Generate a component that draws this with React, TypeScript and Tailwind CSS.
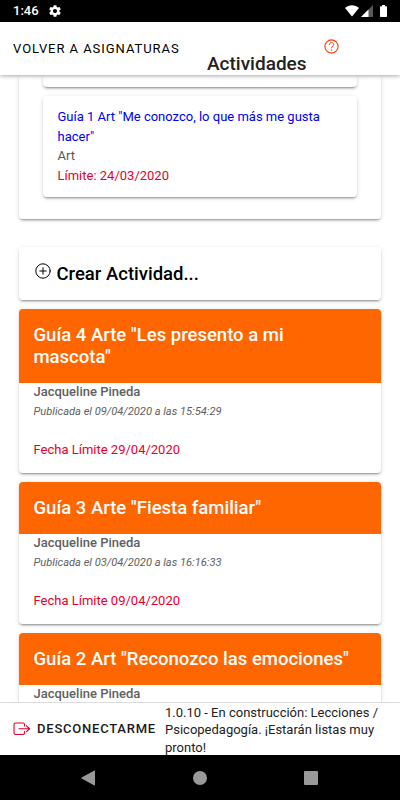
import React from 'react';

interface Activity {
  title: string;
  teacher: string;
  published?: string;
  limit?: string;
}

const activities: Activity[] = [
  {
    title: 'Guía 4 Arte "Les presento a mi mascota"',
    teacher: 'Jacqueline Pineda',
    published: '09/04/2020 a las 15:54:29',
    limit: '29/04/2020',
  },
  {
    title: 'Guía 3 Arte "Fiesta familiar"',
    teacher: 'Jacqueline Pineda',
    published: '03/04/2020 a las 16:16:33',
    limit: '09/04/2020',
  },
  {
    title: 'Guía 2 Art "Reconozco las emociones"',
    teacher: 'Jacqueline Pineda',
  },
];

const cardShadow =
  'rounded-[4px] bg-white shadow-[0_3px_1px_-2px_rgba(0,0,0,0.2),0_2px_2px_0_rgba(0,0,0,0.14),0_1px_5px_0_rgba(0,0,0,0.12)]';

const StatusBar = () => (
  <div className="flex h-[22px] shrink-0 items-center bg-black pr-[13px] pl-[13px] text-white">
    <span className="text-[13px] leading-[22px] font-medium">1:46</span>
    <svg className="ml-[9px] h-[14px] w-[14px]" viewBox="0 0 24 24" fill="currentColor">
      <path d="M19.43 12.98c.04-.32.07-.64.07-.98s-.03-.66-.07-.98l2.11-1.65c.19-.15.24-.42.12-.64l-2-3.46c-.12-.22-.39-.3-.61-.22l-2.49 1c-.52-.4-1.08-.73-1.69-.98l-.38-2.65C14.46 2.18 14.25 2 14 2h-4c-.25 0-.46.18-.49.42l-.38 2.65c-.61.25-1.17.59-1.69.98l-2.49-1c-.23-.09-.49 0-.61.22l-2 3.46c-.13.22-.07.49.12.64l2.11 1.65c-.04.32-.07.65-.07.98s.03.66.07.98l-2.11 1.65c-.19.15-.24.42-.12.64l2 3.46c.12.22.39.3.61.22l2.49-1c.52.4 1.08.73 1.69.98l.38 2.65c.03.24.24.42.49.42h4c.25 0 .46-.18.49-.42l.38-2.65c.61-.25 1.17-.59 1.69-.98l2.49 1c.23.09.49 0 .61-.22l2-3.46c.12-.22.07-.49-.12-.64l-2.11-1.65zM12 15.5c-1.93 0-3.5-1.57-3.5-3.5s1.57-3.5 3.5-3.5 3.5 1.57 3.5 3.5-1.57 3.5-3.5 3.5z" />
    </svg>
    <svg className="ml-auto h-[12px] w-[14px]" viewBox="0 0 14 12" fill="currentColor">
      <path d="M0 3C4-.6 10-.6 14 3L7 11.500z" />
    </svg>
    <svg className="ml-[2px] h-[12px] w-[12px]" viewBox="0 0 12 12" fill="currentColor">
      <path d="M12 0v12H0z" opacity=".35" />
      <path d="M7.500 4.500V12H0z" />
    </svg>
    <svg className="ml-[7px] h-[12px] w-[7px]" viewBox="0 0 7 12" fill="currentColor">
      <path d="M2 0h3v1.200h1.300q.7 0 .7.700v9.400q0 .7-.7.700H.7q-.7 0-.7-.7V1.900q0-.7.700-.7H2z" />
    </svg>
  </div>
);

const Header = () => (
  <header className="z-10 flex h-[53px] shrink-0 bg-white pl-[13px] shadow-[0_1px_4px_rgba(0,0,0,0.35)]">
    <button className="h-[53px] w-[194px] text-left text-[13px] font-normal tracking-[0.95px] text-black uppercase">
      Volver a asignaturas
    </button>
    <h1 className="w-[116px] pt-[30px] text-[19px] leading-[24px] font-medium text-[#222]">
      Actividades
    </h1>
    <svg
      className="mt-[17px] ml-[1px] h-[15px] w-[15px]"
      viewBox="0 0 15 15"
      fill="none"
      stroke="#ff3d0a"
      strokeLinecap="round"
    >
      <circle cx="7.500" cy="7.500" r="6.600" strokeWidth="1.100" />
      <path d="M5.300 5.600C5.400 4.300 6.300 3.600 7.500 3.600S9.700 4.300 9.700 5.500C9.700 6.900 7.600 7.200 7.600 8.900" strokeWidth="1" />
      <circle cx="7.550" cy="11" r=".65" fill="#ff3d0a" stroke="none" />
    </svg>
  </header>
);

const ActivityCard: React.FC<Activity> = ({ title, teacher, published, limit }) => (
  <article className={`mb-[9px] overflow-hidden ${cardShadow}`}>
    <h2 className="bg-[#ff6600] py-[15px] pr-[20px] pl-[15px] text-[18.500px] leading-[22px] font-medium text-white">
      {title}
    </h2>
    <div className="h-[90px] px-[15px] text-[13px] leading-[19px] text-[#606060]">
      <p className="leading-[17px] font-medium">{teacher}</p>
      {published && (
        <p className="pt-[1px] text-[11.100px] leading-[21px] italic">Publicada el {published}</p>
      )}
      {limit && <p className="pt-[18px] text-[#e3002b]">Fecha Límite {limit}</p>}
    </div>
  </article>
);

const Footer = () => (
  <footer className="z-10 flex h-[53px] shrink-0 items-center border-t border-[#dcdcdc] bg-white pl-[13px] text-black">
    <svg
      className="h-[14px] w-[18px]"
      viewBox="0 0 18 14"
      fill="none"
      stroke="#e3002b"
      strokeWidth="1.100"
      strokeLinecap="round"
      strokeLinejoin="round"
    >
      <path d="M11.500 4V2.500Q11.500 1 10 1H2.500Q1 1 1 2.500V11Q1 12.500 2.500 12.500H10Q11.500 12.500 11.500 11V9.500M6 6.750H16.500M13.500 3.800L16.600 6.750L13.500 9.700" />
    </svg>
    <span className="ml-[6px] w-[128px] text-[13px] font-medium tracking-[0.78px] text-[#1a1a1a] uppercase">
      Desconectarme
    </span>
    <p className="w-[225px] pt-[2px] text-[13px] leading-[17.500px] text-[#222]">
      1.0.10 - En construcción: Lecciones / Psicopedagogía. ¡Estarán listas muy pronto!
    </p>
  </footer>
);

const NavigationBar = () => (
  <div className="flex h-[45px] shrink-0 items-center bg-black pl-[81px] text-[#999]">
    <svg className="h-[16px] w-[14px]" viewBox="0 0 14 16" fill="currentColor">
      <path d="M13 .7Q14 .2 14 1.200V14.800Q14 15.800 13 15.300L.6 8.500Q0 8 .6 7.500z" />
    </svg>
    <div className="ml-[98px] h-[14px] w-[14px] rounded-full bg-[#999]" />
    <div className="ml-[97px] h-[14px] w-[14px] rounded-[1px] bg-[#999]" />
  </div>
);

export default function App() {
  return (
    <div className="flex h-[800px] w-[400px] flex-col overflow-hidden bg-white font-[Roboto,sans-serif]">
      <StatusBar />
      <Header />
      <main className="min-h-0 flex-1 overflow-hidden pr-[19px] pl-[18.500px]">
        <section className={`mb-[28px] h-[144px] px-[24px] ${cardShadow}`}>
          <div className={`mb-[9px] h-[12px] ${cardShadow}`} />
          <div className={`h-[101px] px-[15px] pt-[11px] text-[13px] leading-[19.500px] ${cardShadow}`}>
            <p className="text-[#0000ee]">Guía 1 Art "Me conozco, lo que más me gusta hacer"</p>
            <p className="text-[#555]">Art</p>
            <p className="text-[#e3002b]">Límite: 24/03/2020</p>
          </div>
        </section>
        <button className={`mb-[9px] flex h-[53px] w-full items-center pl-[16px] ${cardShadow}`}>
          <svg
            className="mb-[5px] h-[16px] w-[16px]"
            viewBox="0 0 16 16"
            fill="none"
            stroke="#000"
            strokeLinecap="round"
          >
            <circle cx="8" cy="8" r="7.200" />
            <path d="M8 4.800V11.200M4.800 8H11.200" />
          </svg>
          <span className="ml-[6px] pt-[2px] text-[18.500px] font-medium">Crear Actividad...</span>
        </button>
        {activities.map((activity) => (
          <ActivityCard key={activity.title} {...activity} />
        ))}
      </main>
      <Footer />
      <NavigationBar />
    </div>
  );
}
